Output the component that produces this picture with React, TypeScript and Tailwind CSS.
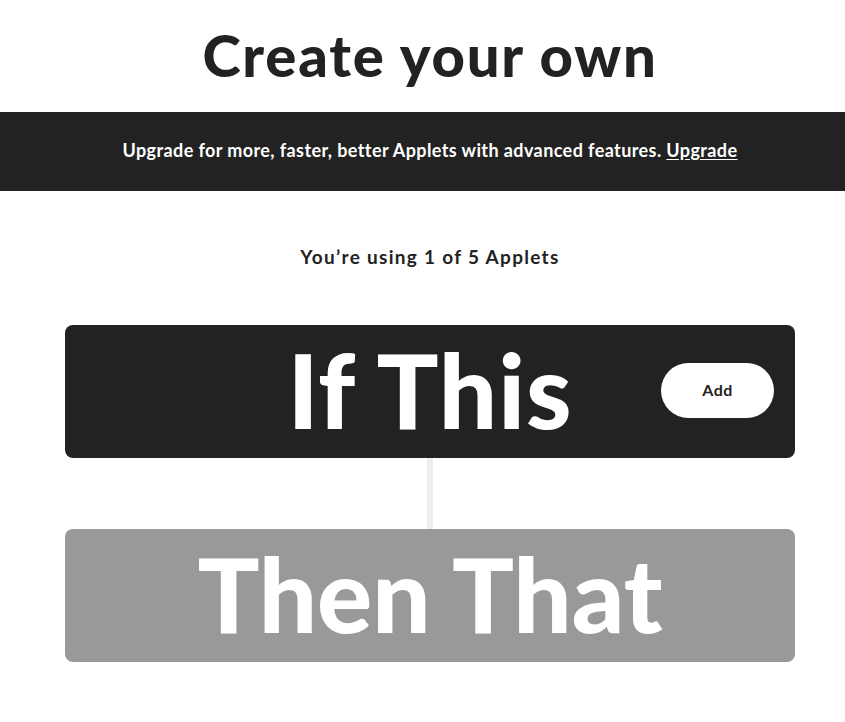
import {FC} from "react";

const font = {fontFamily: "Lato, 'Open Sans', sans-serif"};

export const App: FC = () => {
    return (
        <div className="min-h-screen bg-white text-[#222]" style={font}>
            {/* Title */}
            <div className="h-[112px] flex items-center justify-center pl-[15px]">
                <h1 className="text-[58px] font-black leading-none tracking-[1.8px] mt-[-2px]">Create your own</h1>
            </div>

            {/* Upgrade banner */}
            <div className="h-[79px] bg-[#222] flex items-center justify-center pl-[15px]">
                <p className="text-white text-[18px] font-bold tracking-[0.4px] mt-[-2px]">
                    Upgrade for more, faster, better Applets with advanced features.{' '}
                    <a href="#" className="underline underline-offset-2">Upgrade</a>
                </p>
            </div>

            <p className="text-center text-[19px] font-bold tracking-[1.3px] mt-[52px] pl-[15px]">You’re using 1 of 5 Applets</p>

            {/* Builder */}
            <div className="mt-[53px] pl-[65px] pr-[50px] flex flex-col items-center">
                <div className="relative w-full h-[133px] bg-[#222] rounded-lg flex items-center justify-center">
                    <span className="text-white text-[103px] font-black leading-none tracking-[1px] mt-[-4px]">If This</span>
                    <button className="absolute right-[21px] top-[38px] w-[113px] h-[55px] rounded-full bg-white text-[#222] text-[16px] font-bold tracking-[0.5px]">
                        Add
                    </button>
                </div>
                <div className="w-[6px] h-[71px] bg-[#eee]"/>
                <div className="w-full h-[133px] bg-[#999] rounded-lg flex items-center justify-center">
                    <span className="text-white text-[103px] font-black leading-none mt-[-4px]">Then That</span>
                </div>
            </div>
        </div>
    );
}

export default App;
